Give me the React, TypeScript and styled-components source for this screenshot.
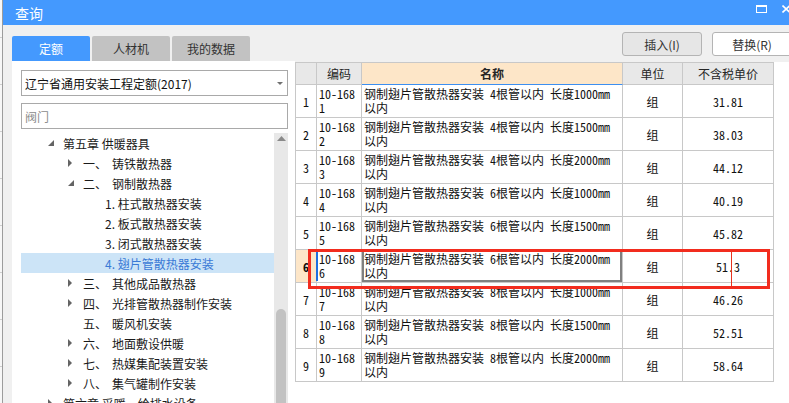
import React from 'react';
import styled, { createGlobalStyle } from 'styled-components';

const GlobalStyle = createGlobalStyle`
  html, body {
    margin: 0;
    padding: 0;
    background: #ffffff;
    overflow: hidden;
  }
  body {
    font-family: "Noto Sans CJK SC", "Noto Sans", sans-serif;
    font-size: 12px;
    color: #1a1a1a;
  }
`;

const CELL_FONT = `"Noto Sans Mono CJK SC", "Noto Sans CJK SC", "Liberation Mono", monospace`;
const GRID_COLS = '21px 45px 261px 60px 91px';
const LINE = '#c8c8c8';

const Screen = styled.div`
  width: 789px;
  height: 403px;
  display: flex;
  overflow: hidden;
`;

const BackStrip = styled.div`
  width: 2px;
  flex: none;
  border-right: 1px solid #9c9c9c;
  background: repeating-linear-gradient(
    to bottom,
    #f7f7f7 0 37px,
    #cfcfcf 37px 38px,
    #f7f7f7 38px 47px
  );
`;

const Dialog = styled.div`
  flex: 1;
  min-width: 0;
  display: flex;
  flex-direction: column;
`;

const TitleBar = styled.div`
  height: 25px;
  flex: none;
  background: #4499fe;
  color: #ffffff;
  font-size: 14px;
  display: flex;
  align-items: center;
  padding-left: 12px;
`;

const WindowControls = styled.div`
  margin-left: auto;
  margin-right: -2px;
  align-self: flex-start;
  margin-top: 5px;
  display: flex;
  align-items: flex-start;
  gap: 15px;
`;

const MaxIcon = styled.span`
  width: 11px;
  height: 8px;
  box-sizing: border-box;
  border: 1px solid #ffffff;
  border-top-width: 2px;
  margin-top: 0;
`;

const Body = styled.div`
  flex: 1;
  min-height: 0;
  background: #f0f0f0;
  display: grid;
  grid-template-columns: 283px 1fr;
  grid-template-rows: 36px 1fr;
  padding-left: 9px;
  overflow: hidden;
`;

const Tabs = styled.div`
  display: flex;
  align-items: flex-end;
  gap: 2px;
`;

const Tab = styled.div<{ $active?: boolean }>`
  width: 78px;
  height: 25px;
  display: flex;
  align-items: center;
  justify-content: center;
  border-radius: 2px 2px 0 0;
  background: ${(p) => (p.$active ? '#4499fe' : '#c2c2c2')};
  color: ${(p) => (p.$active ? '#ffffff' : '#333333')};
`;

const Toolbar = styled.div`
  display: flex;
  justify-content: flex-end;
  align-items: flex-start;
  gap: 10px;
  padding-top: 7px;
  margin-right: -3px;
`;

const Button = styled.div<{ $pressed?: boolean }>`
  width: 80px;
  height: 24px;
  box-sizing: border-box;
  border: 1px solid #b4b4b4;
  border-radius: 3px;
  background: ${(p) => (p.$pressed ? '#e6e6e6' : '#ffffff')};
  color: #333333;
  display: flex;
  align-items: center;
  justify-content: center;
  flex: none;
`;

const TabPanel = styled.div`
  background: #ffffff;
  display: flex;
  flex-direction: column;
  padding: 9px 7px 0 9px;
  min-height: 0;
  overflow: hidden;
`;

const Select = styled.div`
  height: 26px;
  flex: none;
  box-sizing: border-box;
  border: 1px solid #a9a9a9;
  display: flex;
  align-items: center;
  padding: 0 4px 0 3px;
  color: #111111;
`;

const SelectArrow = styled.span`
  margin-left: auto;
  width: 0;
  height: 0;
  border-left: 3px solid transparent;
  border-right: 3px solid transparent;
  border-top: 3px solid #707070;
`;

const Search = styled.div`
  height: 26px;
  flex: none;
  margin-top: 7px;
  box-sizing: border-box;
  border: 1px solid #a9a9a9;
  display: flex;
  align-items: center;
  padding-left: 3px;
  color: #8c8c8c;
`;

const TreeArea = styled.div`
  margin-top: 4px;
  flex: 1;
  min-height: 0;
  display: grid;
  grid-template-columns: 1fr 14px;
`;

const TreeList = styled.div`
  overflow: hidden;
`;

const TreeRow = styled.div<{ $indent: number; $selected?: boolean }>`
  height: 20px;
  display: flex;
  align-items: center;
  white-space: nowrap;
  padding-left: ${(p) => p.$indent}px;
  background: ${(p) => (p.$selected ? '#cce4f7' : 'transparent')};
  color: ${(p) => (p.$selected ? '#3a7ad6' : '#1a1a1a')};
`;

const Toggle = styled.span`
  width: 16px;
  flex: none;
  display: flex;
  align-items: center;
  padding-left: 1px;
  box-sizing: border-box;
`;

const Prefix = styled.span`
  width: 29px;
  flex: none;
`;

const ScrollTrack = styled.div`
  background: #e8e8e8;
  display: flex;
  flex-direction: column;
  min-height: 0;
`;

const ScrollUp = styled.div`
  height: 14px;
  flex: none;
  display: flex;
  justify-content: center;
  padding-top: 3px;
  box-sizing: border-box;
`;

const ScrollGap = styled.div`
  height: 162px;
  flex: none;
`;

const ScrollThumb = styled.div`
  flex: 1;
  width: 10px;
  margin: 0 auto;
  border-radius: 5px 5px 0 0;
  background: #c2c2c2;
`;

const GridPanel = styled.div`
  background: #ffffff;
  margin-top: 1px;
  min-height: 0;
  overflow: hidden;
`;

const Table = styled.div`
  width: 479px;
  box-sizing: border-box;
  border-left: 1px solid ${LINE};
  border-top: 1px solid ${LINE};
  font-family: ${CELL_FONT};
  font-size: 12px;
  color: #111111;
`;

const GridRow = styled.div<{ $height: number }>`
  display: grid;
  grid-template-columns: ${GRID_COLS};
  height: ${(p) => p.$height}px;
  position: relative;
`;

const HeaderCell = styled.div<{ $sorted?: boolean }>`
  box-sizing: border-box;
  border-right: 1px solid ${LINE};
  border-bottom: 1px solid ${(p) => (p.$sorted ? '#3d8ff0' : LINE)};
  background: ${(p) => (p.$sorted ? '#fde6c8' : '#e8e8e8')};
  font-family: "Noto Sans CJK SC", "Noto Sans", sans-serif;
  font-weight: ${(p) => (p.$sorted ? 700 : 400)};
  color: #262626;
  display: flex;
  align-items: center;
  justify-content: center;
`;

const Cell = styled.div`
  box-sizing: border-box;
  border-right: 1px solid ${LINE};
  border-bottom: 1px solid ${LINE};
  position: relative;
  overflow: hidden;
`;

const NumCell = styled(Cell)<{ $current?: boolean }>`
  display: flex;
  align-items: center;
  justify-content: center;
  background: ${(p) => (p.$current ? '#fde6c8' : 'transparent')};
  font-weight: ${(p) => (p.$current ? 700 : 400)};
`;

const TextCell = styled(Cell)<{ $marked?: boolean; $editing?: boolean }>`
  padding: 2px 0 0 2px;
  line-height: 14px;
  white-space: pre;
  overflow: visible;
  box-shadow: ${(p) => (p.$editing ? 'inset 0 0 0 2px #808080' : 'none')};
  &::before {
    content: '';
    display: ${(p) => (p.$marked ? 'block' : 'none')};
    position: absolute;
    left: -1px;
    top: 2px;
    bottom: 1px;
    width: 2px;
    background: #1e6fe0;
  }
`;

const CenterCell = styled(Cell)`
  display: flex;
  align-items: center;
  justify-content: center;
  overflow: visible;
`;

const Caret = styled.span`
  position: absolute;
  left: 48px;
  top: 1px;
  width: 1px;
  height: 36px;
  background: #e8321e;
`;

const Highlight = styled.div`
  position: absolute;
  left: 12px;
  top: -1px;
  width: 462px;
  height: 40px;
  box-sizing: border-box;
  border: 3px solid #f22c1e;
  z-index: 5;
  pointer-events: none;
`;

const Triangle = ({ open }: { open: boolean }) =>
  open ? (
    <svg width="7" height="7" viewBox="0 0 7 7">
      <polygon points="6,0 6,6 0,6" fill="#646464" />
    </svg>
  ) : (
    <svg width="5" height="8" viewBox="0 0 5 8">
      <polygon points="0,0 4,4 0,8" fill="#646464" />
    </svg>
  );

type TreeItem = {
  level: 0 | 1 | 2;
  toggle?: 'open' | 'closed';
  prefix?: string;
  text: string;
  selected?: boolean;
};

const INDENT = [26, 46, 68];

const tree: TreeItem[] = [
  { level: 0, toggle: 'open', text: '第五章 供暖器具' },
  { level: 1, toggle: 'closed', prefix: '一、', text: '铸铁散热器' },
  { level: 1, toggle: 'open', prefix: '二、', text: '钢制散热器' },
  { level: 2, text: '1. 柱式散热器安装' },
  { level: 2, text: '2. 板式散热器安装' },
  { level: 2, text: '3. 闭式散热器安装' },
  { level: 2, text: '4. 翅片管散热器安装', selected: true },
  { level: 1, toggle: 'closed', prefix: '三、', text: '其他成品散热器' },
  { level: 1, toggle: 'closed', prefix: '四、', text: '光排管散热器制作安装' },
  { level: 1, prefix: '五、', text: '暖风机安装' },
  { level: 1, toggle: 'closed', prefix: '六、', text: '地面敷设供暖' },
  { level: 1, toggle: 'closed', prefix: '七、', text: '热媒集配装置安装' },
  { level: 1, toggle: 'closed', prefix: '八、', text: '集气罐制作安装' },
  { level: 0, toggle: 'closed', text: '第六章 采暖、给排水设备' },
];

const quotas = [
  { n: '1', pipes: '4', len: '1000', price: '31.81' },
  { n: '2', pipes: '4', len: '1500', price: '38.03' },
  { n: '3', pipes: '4', len: '2000', price: '44.12' },
  { n: '4', pipes: '6', len: '1000', price: '40.19' },
  { n: '5', pipes: '6', len: '1500', price: '45.82' },
  { n: '6', pipes: '6', len: '2000', price: '51.3' },
  { n: '7', pipes: '8', len: '1000', price: '46.26' },
  { n: '8', pipes: '8', len: '1500', price: '52.51' },
  { n: '9', pipes: '8', len: '2000', price: '58.64' },
];

const CURRENT = '6';

export default function App() {
  return (
    <Screen>
      <GlobalStyle />
      <BackStrip />
      <Dialog>
        <TitleBar>
          查询
          <WindowControls>
            <MaxIcon />
            <svg width="9" height="8" viewBox="0 0 9 8">
              <path d="M0.5 0.5 L8 7.5 M8 0.5 L0.5 7.5" stroke="#ffffff" strokeWidth="1.6" />
            </svg>
          </WindowControls>
        </TitleBar>
        <Body>
          <Tabs>
            <Tab $active>定额</Tab>
            <Tab>人材机</Tab>
            <Tab>我的数据</Tab>
          </Tabs>
          <Toolbar>
            <Button $pressed>插入(I)</Button>
            <Button>替换(R)</Button>
          </Toolbar>

          <TabPanel>
            <Select>
              辽宁省通用安装工程定额(2017)
              <SelectArrow />
            </Select>
            <Search>阀门</Search>
            <TreeArea>
              <TreeList>
                {tree.map((item, i) => (
                  <TreeRow key={i} $indent={INDENT[item.level]} $selected={item.selected}>
                    <Toggle>{item.toggle && <Triangle open={item.toggle === 'open'} />}</Toggle>
                    {item.prefix && <Prefix>{item.prefix}</Prefix>}
                    {item.text}
                  </TreeRow>
                ))}
              </TreeList>
              <ScrollTrack>
                <ScrollUp>
                  <svg width="9" height="5" viewBox="0 0 9 5">
                    <polygon points="0,5 4.5,0 9,5" fill="#8a8a8a" />
                  </svg>
                </ScrollUp>
                <ScrollGap />
                <ScrollThumb />
              </ScrollTrack>
            </TreeArea>
          </TabPanel>

          <GridPanel>
            <Table>
              <GridRow $height={22}>
                <HeaderCell />
                <HeaderCell>编码</HeaderCell>
                <HeaderCell $sorted>名称</HeaderCell>
                <HeaderCell>单位</HeaderCell>
                <HeaderCell>不含税单价</HeaderCell>
              </GridRow>
              {quotas.map((q) => {
                const current = q.n === CURRENT;
                return (
                  <GridRow key={q.n} $height={33}>
                    <NumCell $current={current}>{q.n}</NumCell>
                    <TextCell $marked={current}>
                      {'10-168'}
                      <br />
                      {q.n}
                    </TextCell>
                    <TextCell $editing={current}>
                      {`钢制翅片管散热器安装 ${q.pipes}根管以内 长度${q.len}mm`}
                      <br />
                      以内
                    </TextCell>
                    <CenterCell>组</CenterCell>
                    <CenterCell>
                      {q.price}
                      {current && <Caret />}
                    </CenterCell>
                    {current && <Highlight />}
                  </GridRow>
                );
              })}
            </Table>
          </GridPanel>
        </Body>
      </Dialog>
    </Screen>
  );
}
